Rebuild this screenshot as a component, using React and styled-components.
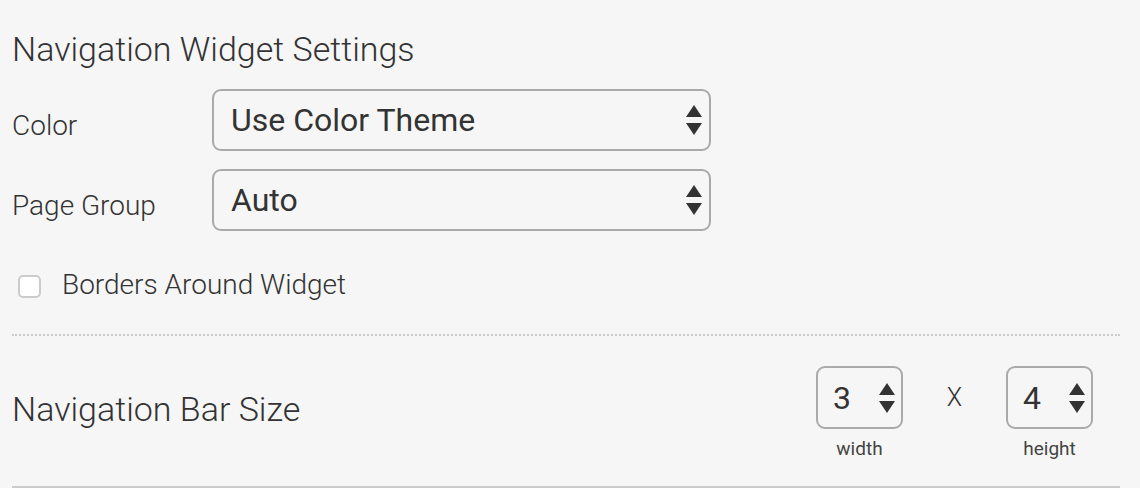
import styled, { createGlobalStyle } from "styled-components"

const GlobalStyle = createGlobalStyle`
    html, body {
        margin: 0;
        padding: 0;
        background: #f6f6f6;
    }
    body {
        font-family: Roboto, "Liberation Sans", Arial, sans-serif;
        color: #333;
    }
`;

function Arrows() {
    return (
        <ArrowIcon width="16" height="30" viewBox="0 0 16 30">
            <polygon points="0,12 8,0 16,12" />
            <polygon points="0,18 16,18 8,30" />
        </ArrowIcon>
    )
}

function SelectField({ label, value }) {
    return (
        <FieldRow>
            <Label>{label}</Label>
            <SelectBox>
                <SelectValue>{value}</SelectValue>
                <Arrows />
            </SelectBox>
        </FieldRow>
    )
}

function SizeInput({ value, caption }) {
    return (
        <SizeField>
            <NumberBox>
                <NumberValue>{value}</NumberValue>
                <Arrows />
            </NumberBox>
            <Caption>{caption}</Caption>
        </SizeField>
    )
}

function App() {
    return (
        <>
            <GlobalStyle />
            <Page>
                <Title>Navigation Widget Settings</Title>
                <SelectField label="Color" value="Use Color Theme" />
                <SelectField label="Page Group" value="Auto" />
                <CheckRow>
                    <Check />
                    <CheckLabel>Borders Around Widget</CheckLabel>
                </CheckRow>
                <Divider />
                <SizeSection>
                    <SectionTitle>Navigation Bar Size</SectionTitle>
                    <SizeControls>
                        <SizeInput value="3" caption="width" />
                        <Times>X</Times>
                        <SizeInput value="4" caption="height" />
                    </SizeControls>
                </SizeSection>
            </Page>
        </>
    )
}

export default App


const Page = styled.div`
    width: 1140px;
    height: 488px;
    box-sizing: border-box;
    padding: 29px 20px 0 12px;
    overflow: hidden;
`;

const Title = styled.h1`
    margin: 0;
    font-size: 34px;
    line-height: 40px;
    font-weight: 300;
    color: #333;
`;

const FieldRow = styled.div`
    display: flex;
    align-items: flex-start;
    margin-top: 20px;

    & + & {
        margin-top: 18px;
    }
`;

const Label = styled.div`
    width: 200px;
    padding-top: 20px;
    font-size: 28px;
    line-height: 34px;
    font-weight: 300;
`;

const SelectBox = styled.div`
    width: 499px;
    height: 62px;
    box-sizing: border-box;
    border: 2px solid #aaa;
    border-radius: 9px;
    display: flex;
    align-items: center;
    justify-content: space-between;
    padding: 0 7px 0 17px;
`;

const SelectValue = styled.span`
    font-size: 32px;
    line-height: 1;
    font-weight: 400;
    color: #333;
`;

const ArrowIcon = styled.svg`
    fill: #333;
    flex-shrink: 0;
`;

const CheckRow = styled.label`
    display: flex;
    align-items: center;
    height: 34px;
    margin-top: 38px;
    padding-left: 6px;
`;

const Check = styled.span`
    width: 23px;
    height: 23px;
    box-sizing: border-box;
    border: 2px solid #ccc;
    border-radius: 5px;
    background: #fff;
    margin-right: 21px;
`;

const CheckLabel = styled.span`
    font-size: 28px;
    line-height: 34px;
    font-weight: 300;
    padding-bottom: 3px;
`;

const Divider = styled.hr`
    margin: 31px 0 0;
    border: 0;
    border-top: 2px dotted #ccc;
    width: 100%;
`;

const SizeSection = styled.div`
    display: flex;
    justify-content: space-between;
    align-items: flex-start;
    padding: 30px 27px 25px 0;
    border-bottom: 2px solid #ccc;
`;

const SectionTitle = styled.h2`
    margin: 23px 0 0;
    font-size: 34px;
    line-height: 40px;
    font-weight: 300;
    color: #333;
`;

const SizeControls = styled.div`
    display: flex;
    align-items: flex-start;
`;

const SizeField = styled.div`
    display: flex;
    flex-direction: column;
    align-items: center;
    width: 87px;
`;

const NumberBox = styled.div`
    width: 87px;
    height: 63px;
    box-sizing: border-box;
    border: 2px solid #aaa;
    border-radius: 9px;
    display: flex;
    align-items: center;
    justify-content: space-between;
    padding: 0 6px 0 15px;
`;

const NumberValue = styled.span`
    font-size: 32px;
    line-height: 1;
    color: #333;
`;

const Caption = styled.div`
    margin-top: 8px;
    font-size: 19px;
    line-height: 24px;
    color: #444;
`;

const Times = styled.div`
    width: 103px;
    height: 63px;
    line-height: 63px;
    text-align: center;
    font-size: 25px;
    font-weight: 300;
`;
